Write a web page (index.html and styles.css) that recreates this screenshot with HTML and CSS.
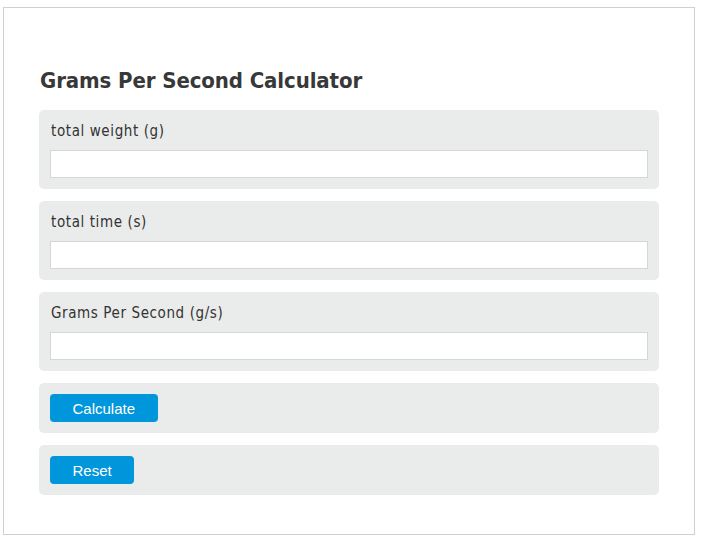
FILE: index.html
```html
<!DOCTYPE html>
<html lang="en">
<head>
    <meta charset="UTF-8">
    <meta name="viewport" content="width=device-width, initial-scale=1.0">
    <title>Grams Per Second Calculator</title>
    <link rel="stylesheet" href="styles.css">
</head>
<body>
    <div class="calc-frame">
        <h2 class="calc-title">Grams Per Second Calculator</h2>

        <div class="calc-row">
            <label class="calc-label">total weight (g)</label>
            <input class="calc-input" type="text">
        </div>
        <div class="calc-row">
            <label class="calc-label">total time (s)</label>
            <input class="calc-input" type="text">
        </div>
        <div class="calc-row">
            <label class="calc-label">Grams Per Second (g/s)</label>
            <input class="calc-input" type="text">
        </div>
        <div class="calc-row btn-row">
            <button class="calc-btn">Calculate</button>
        </div>
        <div class="calc-row btn-row">
            <button class="calc-btn">Reset</button>
        </div>
    </div>
</body>
</html>
```

FILE: styles.css
```css
body {
    margin: 0;
    background-color: white;
}
* {
    box-sizing: border-box;
}
.calc-frame {
    margin: 7px 0 0 3px;
    width: 692px;
    height: 528px;
    border: 1px solid #d0d0d4;
    padding: 58px 35px 0 35px;
    font-family: "DejaVu Sans Condensed", "DejaVu Sans", sans-serif;
    color: #333;
}
.calc-title {
    margin: 0 0 14px 1px;
    font-size: 22px;
    font-weight: bold;
    line-height: 30px;
    color: #383838;
    letter-spacing: -0.1px;
}
.calc-row {
    display: flex;
    flex-direction: column;
    background-color: #eaebeb;
    border-radius: 5px;
    padding: 11px;
    margin-bottom: 12px;
    height: 79px;
}
.calc-label {
    font-size: 15px;
    line-height: 20px;
    margin: 0 0 9px 1px;
    color: #333;
    letter-spacing: 0.6px;
}
.calc-input {
    height: 29px;
    width: 100%;
    border: 1px solid #d6d6d6;
    background: white;
    margin: 0;
}
.btn-row {
    height: 50px;
    align-items: flex-start;
}
.calc-btn {
    background-color: #0096db;
    color: white;
    border: none;
    border-radius: 4px;
    height: 28px;
    padding: 0 22.5px;
    font-family: "Liberation Sans", Arial, sans-serif;
    font-size: 15px;
}
```
